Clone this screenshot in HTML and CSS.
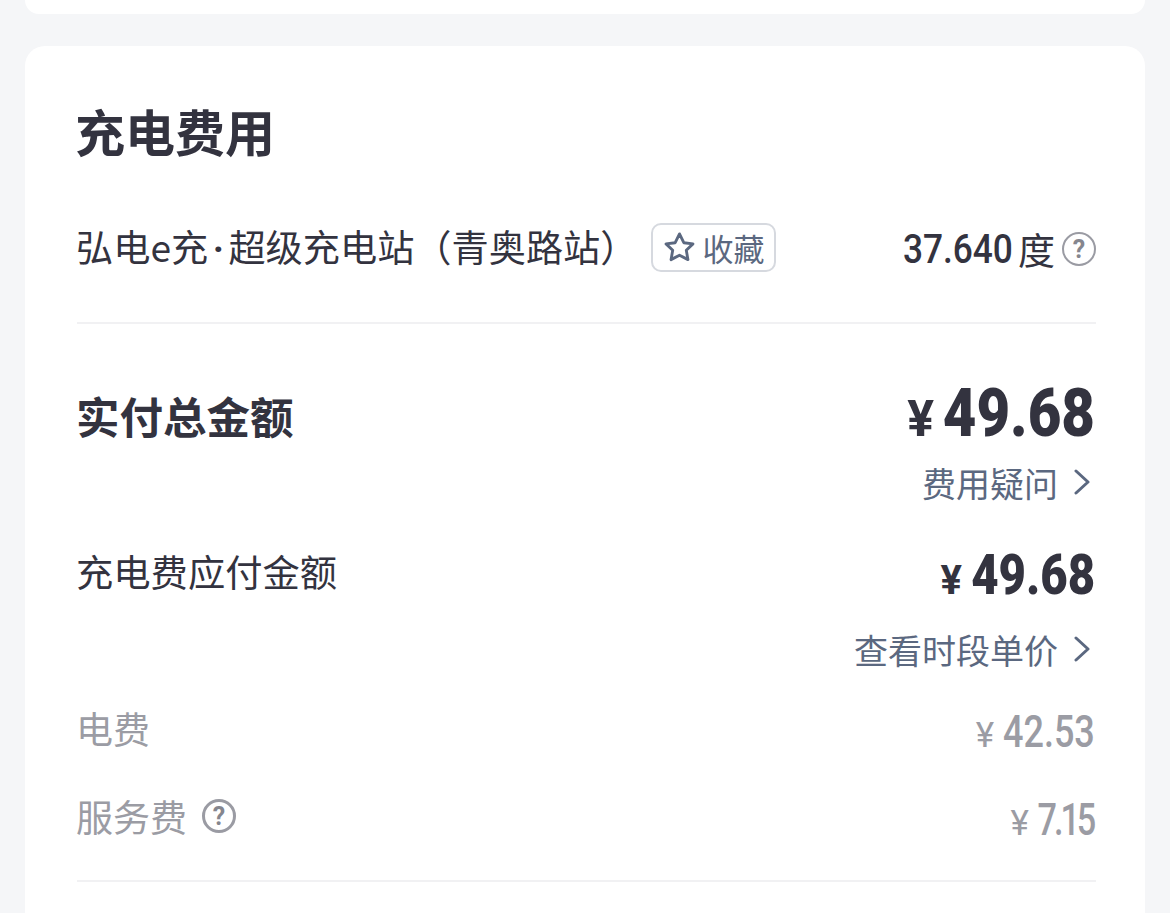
FILE: index.html
```html
<!DOCTYPE html>
<html lang="zh-CN">
<head>
  <meta charset="UTF-8">
  <meta name="viewport" content="width=device-width, initial-scale=1.0">
  <title>充电费用</title>
  <link rel="stylesheet" href="styles.css">
</head>
<body>
  <div class="card card-top"></div>

  <div class="card card-fee">
    <h2 class="fee-title">充电费用</h2>

    <div class="station-row">
      <div class="station-name">
        <span>弘电e充<span class="dot">·</span>超级充电站（青奥路站）</span>
        <button class="fav-btn">
          <svg class="star" viewBox="3 3 26 25"><path d="M16 4.5l3.6 7.4 7.7 1-5.6 5.4 1.4 7.8-7.1-3.7-7.1 3.7 1.4-7.8-5.6-5.4 7.7-1z" fill="none" stroke="#5b6880" stroke-width="2.4" stroke-linejoin="round"/></svg>
          <span>收藏</span>
        </button>
      </div>
      <div class="station-kwh">
        <span class="num kwh-num">37.640</span>
        <span>度</span>
        <span class="help help-dark">?</span>
      </div>
    </div>

    <div class="total-block">
      <div class="line total-line">
        <span class="total-label">实付总金额</span>
        <span class="price price-big"><i class="yen">¥</i><b class="num">49.68</b></span>
      </div>
      <a class="link-row link-fee">费用疑问<svg class="chev" viewBox="0 0 16 26"><path d="M2 2l12 11L2 24" fill="none" stroke="#5b6880" stroke-width="3" stroke-linecap="round" stroke-linejoin="round"/></svg></a>
    </div>

    <div class="payable-block">
      <div class="line payable-line">
        <span class="payable-label">充电费应付金额</span>
        <span class="price price-mid"><i class="yen">¥</i><b class="num">49.68</b></span>
      </div>
      <a class="link-row link-time">查看时段单价<svg class="chev" viewBox="0 0 16 26"><path d="M2 2l12 11L2 24" fill="none" stroke="#5b6880" stroke-width="3" stroke-linecap="round" stroke-linejoin="round"/></svg></a>
    </div>

    <div class="line sub-line sub-first">
      <span>电费</span>
      <span class="price price-sub price-long"><i class="yen">¥</i><span class="num">42.53</span></span>
    </div>
    <div class="line sub-line sub-second">
      <span class="sub-label">服务费<span class="help help-grey">?</span></span>
      <span class="price price-sub price-short"><i class="yen">¥</i><span class="num">7.15</span></span>
    </div>

    <div class="divider-bottom"></div>
  </div>
</body>
</html>
```

FILE: styles.css
```css
html, body {
  height: 913px;
  overflow: hidden;
}

body {
  margin: 0;
  padding: 0 25px;
  background-color: #f5f6f8;
  font-family: "Noto Sans CJK SC", "Noto Sans", sans-serif;
  color: #33333f;
}

.card {
  background-color: #fff;
}

.card-top {
  height: 14px;
  border-radius: 0 0 20px 20px;
}

.card-fee {
  margin-top: 32px;
  height: 900px;
  padding: 0 49px 0 52px;
  border-radius: 20px 20px 0 0;
}

.fee-title {
  margin: 0 0 0 -2px;
  padding-top: 49px;
  font-size: 50px;
  line-height: 70px;
  font-weight: 700;
}

.station-row {
  display: flex;
  justify-content: space-between;
  align-items: center;
  height: 100px;
  margin-top: 34px;
  padding-bottom: 23px;
  border-bottom: 2px solid #f1f1f3;
  font-size: 37.2px;
}

.station-name {
  display: flex;
  align-items: center;
  margin-left: -1px;
  margin-bottom: 6px;
}

.dot {
  font-family: Roboto, sans-serif;
  font-weight: 700;
  padding: 0 4.5px;
}

.fav-btn {
  display: flex;
  align-items: center;
  gap: 7px;
  width: 125px;
  height: 49px;
  margin-left: 14px;
  margin-top: 2px;
  padding: 0 0 0 11px;
  box-sizing: border-box;
  background: #fff;
  border: 2px solid #d6d9df;
  border-radius: 10px;
  font-family: inherit;
  font-size: 31px;
  color: #5b6880;
}

.star {
  width: 31px;
  height: 30px;
}

.station-kwh {
  display: flex;
  align-items: center;
  font-size: 37px;
}

.num {
  display: inline-block;
  font-family: Roboto, "Liberation Sans", sans-serif;
  font-style: normal;
  transform: scaleX(0.86);
  transform-origin: right center;
}

.kwh-num {
  font-size: 41px;
  font-weight: 500;
  margin-right: 5px;
}

.help {
  display: inline-flex;
  align-items: center;
  justify-content: center;
  box-sizing: border-box;
  width: 34px;
  height: 34px;
  border-radius: 50%;
  font-family: Roboto, sans-serif;
  font-weight: 700;
  font-size: 25px;
}

.help-dark {
  margin-left: 7px;
  border: 2px solid #9a9ba3;
  color: #85868e;
}

.help-grey {
  margin-left: 15px;
  border: 3px solid #9a9ba3;
  color: #85868e;
}

.line {
  display: flex;
  justify-content: space-between;
  align-items: center;
}

.total-block {
  margin-top: 52px;
}

.total-line {
  height: 78px;
}

.total-label {
  margin-left: -1px;
  font-size: 43.5px;
  font-weight: 700;
}

.price {
  display: flex;
  align-items: baseline;
  margin-right: 1px;
}

.yen {
  font-family: Roboto, sans-serif;
  font-style: normal;
  font-weight: 700;
}

.price-big {
  margin-top: -4px;
}

.price-big .yen {
  font-size: 50px;
  margin-right: -12px;
}

.price-big .num {
  font-size: 66px;
  font-weight: 900;
  transform: scaleX(0.88);
}

.price-mid {
  margin-top: 8px;
}

.price-mid .yen {
  font-size: 40px;
  margin-right: -11px;
}

.price-mid .num {
  font-size: 55px;
  font-weight: 900;
}

.link-row {
  display: flex;
  justify-content: flex-end;
  align-items: center;
  gap: 16px;
  height: 50px;
  font-size: 34px;
  color: #5b6880;
}

.link-fee {
  margin-top: 3px;
}

.chev {
  width: 16px;
  height: 26px;
  margin-right: 6px;
}

.payable-block {
  margin-top: 34px;
}

.payable-line {
  height: 60px;
}

.payable-label {
  margin-left: -1px;
  font-size: 37.3px;
}

.link-time {
  margin-top: 23px;
}

.sub-line {
  height: 56px;
  font-size: 37px;
  color: #9b9ca4;
}

.sub-first {
  margin-top: 26px;
}

.sub-second {
  margin-top: 32px;
}

.sub-first > span:first-child,
.sub-label {
  margin-left: -1px;
}

.sub-label {
  display: flex;
  align-items: center;
}

.price-sub {
  margin-top: 6px;
}

.price-sub .yen {
  font-size: 35px;
  font-weight: 400;
}

.price-long .yen {
  margin-right: -14px;
}

.price-short .yen {
  margin-right: -9px;
}

.price-sub .num {
  font-size: 45px;
  font-weight: 500;
  transform: scaleX(0.8);
}

.price-short .num {
  letter-spacing: -4px;
  margin-right: 2px;
  transform: scaleX(0.76);
}

.divider-bottom {
  margin-top: 36px;
  border-top: 2px solid #f1f1f3;
}
```
